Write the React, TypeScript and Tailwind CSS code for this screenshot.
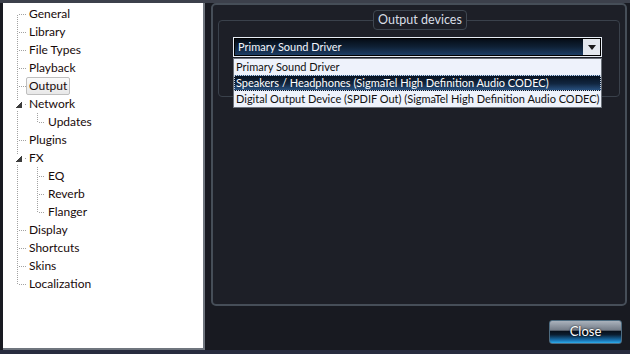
import React from "react";

type Row = {
  label: string;
  level: 0 | 1;
  expander?: boolean;
  lastChild?: boolean;
  selected?: boolean;
};

const rows: Row[] = [
  { label: "General", level: 0 },
  { label: "Library", level: 0 },
  { label: "File Types", level: 0 },
  { label: "Playback", level: 0 },
  { label: "Output", level: 0, selected: true },
  { label: "Network", level: 0, expander: true },
  { label: "Updates", level: 1, lastChild: true },
  { label: "Plugins", level: 0 },
  { label: "FX", level: 0, expander: true },
  { label: "EQ", level: 1 },
  { label: "Reverb", level: 1 },
  { label: "Flanger", level: 1, lastChild: true },
  { label: "Display", level: 0 },
  { label: "Shortcuts", level: 0 },
  { label: "Skins", level: 0 },
  { label: "Localization", level: 0 },
];

const devices = [
  "Primary Sound Driver",
  "Speakers / Headphones (SigmaTel High Definition Audio CODEC)",
  "Digital Output Device (SPDIF Out) (SigmaTel High Definition Audio CODEC)",
];

function TreeLines({ row, first, last }: { row: Row; first: boolean; last: boolean }) {
  const w = row.level === 0 ? 23 : 42;
  return (
    <svg width={w} height={18} className="shrink-0" shapeRendering="crispEdges">
      <g stroke="#a2a2a2" strokeWidth={1} strokeDasharray="1 1">
        {row.expander ? (
          <>
            <line x1={14.5} y1={0} x2={14.5} y2={5} />
            <line x1={14.5} y1={16} x2={14.5} y2={18} />
          </>
        ) : (
          <line x1={14.5} y1={first ? 10 : 0} x2={14.5} y2={last ? 10 : 18} />
        )}
        {row.level === 0 && !row.expander && <line x1={16} y1={9.5} x2={23} y2={9.5} />}
        {row.level === 1 && (
          <>
            <line x1={34.5} y1={0} x2={34.5} y2={row.lastChild ? 10 : 18} />
            <line x1={36} y1={9.5} x2={42} y2={9.5} />
          </>
        )}
      </g>
      {row.expander && (
        <>
          <polygon points="18.5,7 18.5,13 12.5,13" fill="#3c3c3c" />
          <rect x={22} y={9} width={1} height={1} fill="#a2a2a2" />
        </>
      )}
    </svg>
  );
}

function Tree() {
  return (
    <div className="ml-[3px] h-[347px] w-[202px] border-r-2 border-b-2 border-[#6f757e] bg-white pt-[2px] font-[Lato] text-[12px] text-[#180a0a]">
      {rows.map((row, i) => (
        <div key={row.label} className="flex h-[18px] items-center">
          <TreeLines row={row} first={i === 0} last={i === rows.length - 1} />
          {row.selected ? (
            <span className="h-[18px] rounded-[2px] border border-[#bfbfbf] bg-[linear-gradient(to_bottom,#fbfbfb,#e8e8e8)] px-[2px] leading-[16px]">
              {row.label}
            </span>
          ) : (
            <span className="px-[3px] leading-[18px]">{row.label}</span>
          )}
        </div>
      ))}
    </div>
  );
}

function DeviceCombo() {
  return (
    <div className="relative ml-[14px] mt-[7px] w-[369px]">
      <div className="flex h-[20px] border border-[#e6ecf4] bg-black p-px">
        <div className="flex flex-1 items-center whitespace-nowrap bg-[linear-gradient(to_bottom,#050c16,#0f2136_50%,#1d3e66)] pl-[3px] text-[11px] text-[#f2f6fc]">
          Primary Sound Driver
        </div>
        <div className="flex w-[17px] items-center justify-center bg-[#e4e8ee]">
          <svg width="8" height="5" viewBox="0 0 8 5">
            <polygon points="0,0 8,0 4,5" fill="#1a1a1a" />
          </svg>
        </div>
      </div>
      <ul className="absolute left-0 top-[21px] w-[369px] whitespace-nowrap border border-[#6b7179] bg-[#eef2fb] text-[11px] text-[#111]">
        {devices.map((d, i) =>
          i === 1 ? (
            <li
              key={d}
              className="h-[16px] border border-dotted border-[#c9d4e4] bg-[linear-gradient(to_bottom,#07111f,#112640_55%,#28507e)] pl-[1px] leading-[14px] text-white"
            >
              {d}
            </li>
          ) : (
            <li key={d} className="h-[16px] pl-[2px] leading-[16px]">
              {d}
            </li>
          )
        )}
      </ul>
    </div>
  );
}

export default function App() {
  return (
    <div className="flex h-[354px] w-[630px] flex-col overflow-hidden bg-[#181a21] font-[Lato]">
      <div className="h-[3px] bg-[#3c404b]" />
      <div className="flex h-[347px]">
        <Tree />
        <div className="ml-[6px] flex flex-col">
          <div className="h-[303px] w-[416px] rounded-[5px] border-2 border-[#464e58] bg-[#1d1f27] px-[5px] pt-[5px]">
            <fieldset className="rounded-[4px] border border-[#3a414b] pb-[39px]">
              <legend className="ml-[154px] rounded-[4px] border border-[#3f4751] bg-[#1d1f27] px-[4px] text-[12.5px] leading-[18px] text-[#d8dee6]">
                Output devices
              </legend>
              <DeviceCombo />
            </fieldset>
          </div>
          <div className="flex justify-end pr-[5px] pt-[14px]">
            <button className="h-[24px] w-[73px] rounded-[3px] border border-[#4d6b80] bg-[linear-gradient(to_bottom,#aab2bc_0%,#737b87_42%,#070f1a_46%,#0b1e31_62%,#1874b4_88%,#2cacec_100%)] text-[13px] text-white [text-shadow:0_0_2px_#000]">
              Close
            </button>
          </div>
        </div>
      </div>
      <div className="h-[4px] bg-[#272b3e]" />
    </div>
  );
}
